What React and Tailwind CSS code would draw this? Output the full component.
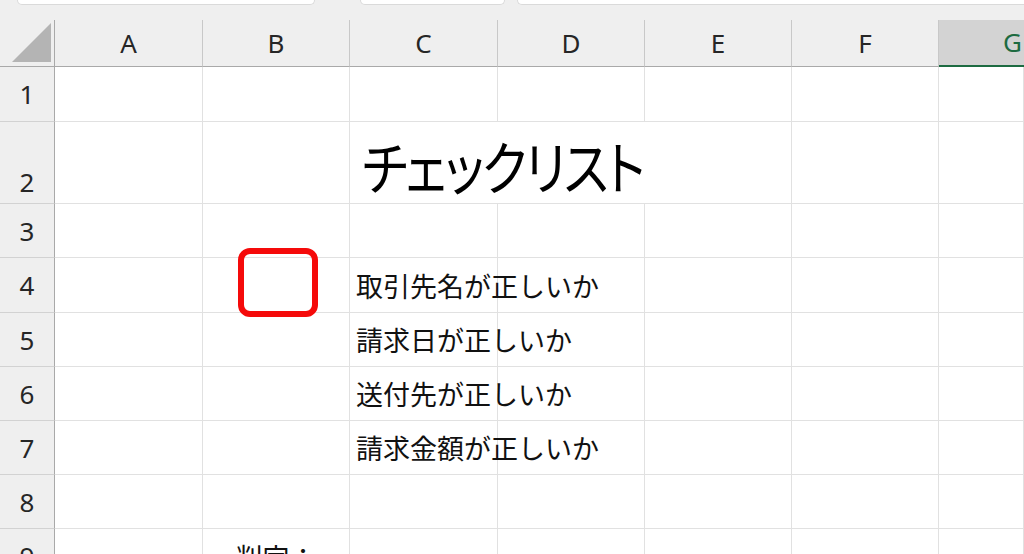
import React from "react";

const cols = ["A", "B", "C", "D", "E", "F", "G"];
const rows = [1, 2, 3, 4, 5, 6, 7, 8, 9];
const items = {
  4: "取引先名が正しいか",
  5: "請求日が正しいか",
  6: "送付先が正しいか",
  7: "請求金額が正しいか",
};

const jp = { fontFamily: '"Noto Sans CJK JP", "Noto Sans", sans-serif' };
const lat = { fontFamily: '"Noto Sans", "Noto Sans CJK JP", sans-serif' };

function Cell({ r, c }) {
  if (r === 2 && (c === "D" || c === "E")) return null;
  if (r === 2 && c === "C") {
    return (
      <div className="col-span-3 border-r border-b border-[#e1e1e1] flex items-end pl-3 pb-[10px]">
        <span
          className="inline-block origin-bottom scale-y-[1.15] text-[50px] leading-none text-black whitespace-nowrap [font-feature-settings:'palt'] tracking-[-2px]"
          style={jp}
        >
          チェックリスト
        </span>
      </div>
    );
  }
  if (c === "C" && items[r]) {
    return (
      <div className="border-r border-b border-[#e1e1e1] flex items-center pl-[6px] overflow-visible">
        <span className="text-[27px] leading-none text-[#111] whitespace-nowrap relative z-10" style={jp}>
          {items[r]}
        </span>
      </div>
    );
  }
  if (c === "B" && r === 4) {
    return (
      <div className="relative border-r border-b border-[#e1e1e1]">
        <div className="absolute left-[35px] top-[-10px] w-[80px] h-[69px] border-[6px] border-[#f50a0a] rounded-[12px]" />
      </div>
    );
  }
  if (c === "B" && r === 9) {
    return (
      <div className="border-r border-b border-[#e1e1e1] flex items-center justify-center">
        <span className="text-[27px] leading-none text-[#111] whitespace-nowrap" style={jp}>
          判定：
        </span>
      </div>
    );
  }
  return <div className="border-r border-b border-[#e1e1e1]" />;
}

export default function App() {
  return (
    <div className="w-[1024px] h-[554px] overflow-hidden bg-white flex flex-col">
      <div className="h-[20px] shrink-0 bg-[#efefef] flex items-start">
        <div className="ml-[17px] w-[298px] h-[5px] bg-white border border-t-0 border-[#dadada] rounded-b-[6px]" />
        <div className="ml-[45px] w-[145px] h-[5px] bg-white border border-t-0 border-[#dadada] rounded-b-[6px]" />
        <div className="ml-[12px] flex-1 h-[5px] bg-white border border-t-0 border-r-0 border-[#dadada] rounded-bl-[6px]" />
      </div>
      <div className="grid grid-cols-[55px_148px_147px_148px_147px_147px_147px_1fr] grid-rows-[47px_55px_82px_54px_55px_54px_54px_54px_54px_55px] bg-white">
        <div className="bg-[#efefef] border-r border-b border-[#a9a9a9] flex items-end justify-end pr-[2px] pb-[3px]">
          <svg width="40" height="40" viewBox="0 0 40 40">
            <polygon points="0,39 39,0 39,39" fill="#b4b4b4" />
          </svg>
        </div>
        {cols.map((c) =>
          c === "G" ? (
            <div
              key={c}
              className="bg-[#d3d3d3] border-b-2 border-[#1d6b41] flex items-center justify-start pl-[64px]"
            >
              <span className="text-[26px] text-[#1d6b41]" style={lat}>
                {c}
              </span>
            </div>
          ) : (
            <div
              key={c}
              className="bg-[#efefef] border-r border-r-[#c8c8c8] border-b border-b-[#a9a9a9] flex items-center justify-center"
            >
              <span className="text-[26px] text-[#262626]" style={lat}>
                {c}
              </span>
            </div>
          )
        )}
        {rows.map((r) => (
          <React.Fragment key={r}>
            <div
              className={
                r === 2
                  ? "bg-[#efefef] border-r border-r-[#a9a9a9] border-b border-b-[#d2d2d2] flex items-end justify-center pb-[8px]"
                  : "bg-[#efefef] border-r border-r-[#a9a9a9] border-b border-b-[#d2d2d2] flex items-center justify-center"
              }
            >
              <span className="text-[26px] leading-none text-[#262626]" style={lat}>
                {r}
              </span>
            </div>
            {cols.map((c) => (
              <Cell key={c} r={r} c={c} />
            ))}
          </React.Fragment>
        ))}
      </div>
    </div>
  );
}
